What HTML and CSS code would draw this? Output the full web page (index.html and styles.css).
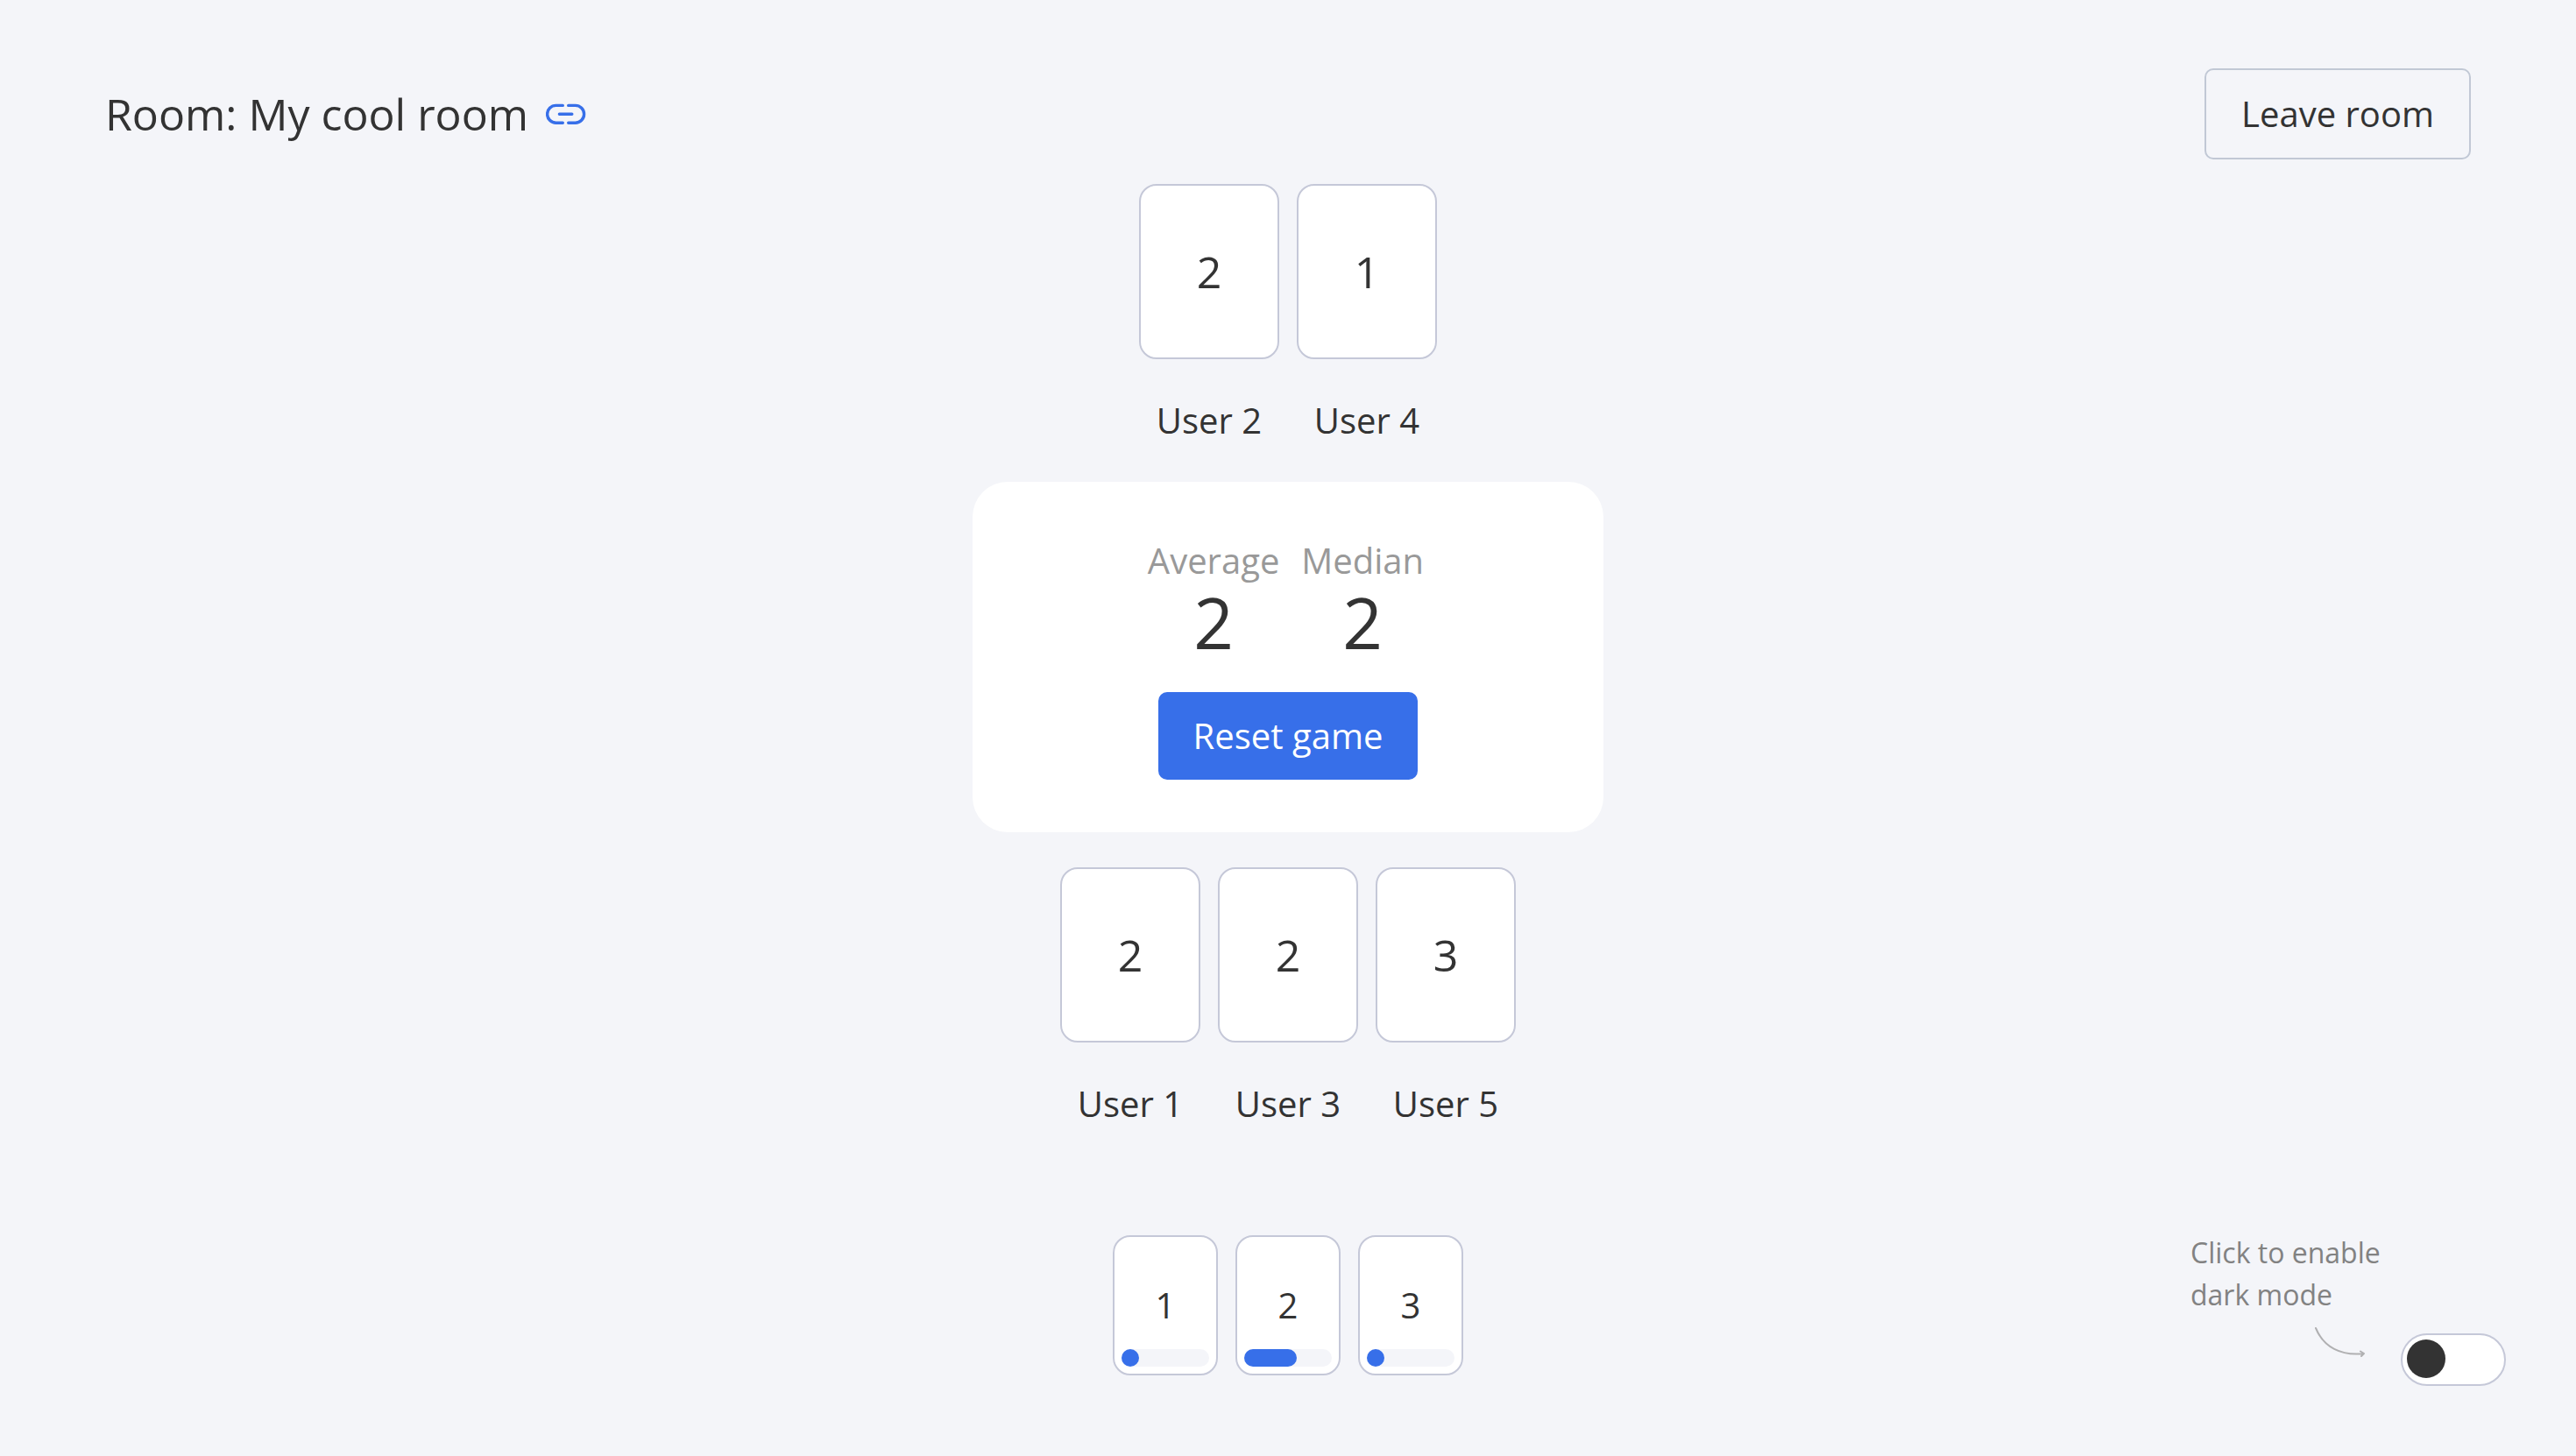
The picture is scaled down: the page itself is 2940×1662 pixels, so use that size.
FILE: index.html
```html
<!DOCTYPE html>
<html lang="en">
<head>
  <meta charset="utf-8">
  <meta name="viewport" content="width=device-width, initial-scale=1">
  <title>My cool room</title>
  <link rel="stylesheet" href="styles.css">
</head>
<body class="page">
  <header class="header">
    <div class="room">
      <h1 class="room-title">Room: My cool room</h1>
      <button class="link-button" type="button" aria-label="Copy room link">
        <svg class="link-icon" viewBox="1 0 46 24" fill="none" stroke="currentColor" stroke-width="3.4" stroke-linecap="round" aria-hidden="true">
          <path d="M20.300 2.400H12.500A9.900 9.900 0 0 0 12.500 22.200H20.300M26.700 2.400H34.700A9.900 9.900 0 0 1 34.700 22.200H26.700M16.400 12.300H30.800"/>
        </svg>
      </button>
    </div>
    <button class="button button-outline" type="button">Leave room</button>
  </header>

  <main class="table">
    <ul class="players">
      <li class="player"><span class="card">2</span><span class="player-name">User 2</span></li>
      <li class="player"><span class="card">1</span><span class="player-name">User 4</span></li>
    </ul>
    <section class="panel">
      <dl class="stats">
        <div class="stat"><dt class="stat-label">Average</dt><dd class="stat-value">2</dd></div>
        <div class="stat"><dt class="stat-label">Median</dt><dd class="stat-value">2</dd></div>
      </dl>
      <button class="button button-primary" type="button">Reset game</button>
    </section>
    <ul class="players">
      <li class="player"><span class="card">2</span><span class="player-name">User 1</span></li>
      <li class="player"><span class="card">2</span><span class="player-name">User 3</span></li>
      <li class="player"><span class="card">3</span><span class="player-name">User 5</span></li>
    </ul>
  </main>

  <footer class="footer">
    <div class="votes">
      <button class="vote" type="button">1<span class="bar"><span class="bar-fill" style="width: 20%"></span></span></button>
      <button class="vote" type="button">2<span class="bar"><span class="bar-fill" style="width: 60%"></span></span></button>
      <button class="vote" type="button">3<span class="bar"><span class="bar-fill" style="width: 20%"></span></span></button>
    </div>
    <div class="theme">
      <label class="theme-label" for="theme">Click to enable<br>dark mode</label>
      <div class="theme-row">
        <svg class="arrow" viewBox="0 0 60 36" fill="none" stroke="currentColor" stroke-width="2" stroke-linecap="round" stroke-linejoin="round" aria-hidden="true">
          <path d="M3 2C12 24 32 34 58 31M54 28.500L58 31L55 34"/>
        </svg>
        <input class="toggle" id="theme" type="checkbox" role="switch">
      </div>
    </div>
  </footer>
</body>
</html>
```
FILE: styles.css
```css
* {
  box-sizing: border-box;
}

.page {
  --ink: #333333;
  --line: #c5c8d8;
  --blue: #376fe9;
  --surface: #f4f5f9;
  display: flex;
  flex-direction: column;
  min-height: 100vh;
  margin: 0;
  padding: 78px 80px 80px;
  background: var(--surface);
  color: var(--ink);
  font-family: "Open Sans", "Noto Sans", sans-serif;
  font-size: 40px;
  line-height: 60px;
}

button {
  margin: 0;
  color: inherit;
  font: inherit;
  cursor: pointer;
}

.header {
  display: flex;
  align-items: center;
  justify-content: space-between;
  padding: 0 40px;
}

.room {
  display: flex;
  align-items: center;
  gap: 20px;
}

.room-title {
  margin: 0;
  font-size: 50px;
  font-weight: 400;
}

.link-button {
  display: flex;
  padding: 0;
  border: 0;
  background: none;
  color: var(--blue);
}

.link-icon {
  width: 46px;
  height: 24px;
}

.button {
  padding: 20px 40px;
  border: 0;
  border-radius: 10px;
}

.button-outline {
  border: 2px solid #c1c8d5;
  background: transparent;
}

.button-primary {
  background: var(--blue);
  color: #ffffff;
}

.table {
  display: flex;
  flex-direction: column;
  align-items: center;
  gap: 40px;
  margin-top: 28px;
}

.players {
  display: flex;
  gap: 20px;
  margin: 0;
  padding: 0;
  list-style: none;
}

.player {
  display: flex;
  flex-direction: column;
  align-items: center;
  gap: 40px;
}

.card,
.vote {
  border: 2px solid var(--line);
  border-radius: 20px;
  background: #ffffff;
}

.card {
  display: flex;
  align-items: center;
  justify-content: center;
  width: 160px;
  height: 200px;
  font-size: 50px;
}

.panel {
  display: flex;
  flex-direction: column;
  align-items: center;
  gap: 40px;
  width: 720px;
  max-width: 100%;
  padding: 60px;
  border-radius: 40px;
  background: #ffffff;
}

.stats {
  display: flex;
  margin: 0;
}

.stat {
  margin-right: 25px;
  text-align: center;
}

.stat:last-child {
  margin-right: 5px;
}

.stat-label {
  color: #999999;
}

.stat-value {
  margin: 0;
  font-size: 80px;
  line-height: 80px;
}

.footer {
  display: grid;
  grid-template-columns: 1fr auto 1fr;
  align-items: end;
  margin-top: auto;
}

.votes {
  display: flex;
  grid-column: 2;
  gap: 20px;
  margin-bottom: 12px;
}

.vote {
  position: relative;
  width: 120px;
  height: 160px;
  padding: 0;
}

.bar {
  position: absolute;
  right: 8px;
  bottom: 8px;
  left: 8px;
  height: 20px;
  border-radius: 10px;
  background: var(--surface);
}

.bar-fill {
  display: block;
  height: 100%;
  border-radius: 10px;
  background: var(--blue);
}

.theme {
  display: flex;
  flex-direction: column;
  justify-self: end;
  gap: 12px;
  width: 360px;
}

.theme-label {
  color: #828282;
  font-size: 32px;
  line-height: 48px;
}

.theme-row {
  display: flex;
  justify-content: flex-end;
  gap: 40px;
  height: 68px;
}

.arrow {
  width: 60px;
  height: 36px;
  color: #b0b0b2;
}

.toggle {
  align-self: flex-end;
  width: 120px;
  height: 60px;
  margin: 0;
  padding: 5px;
  border: 2px solid var(--line);
  border-radius: 30px;
  background: #ffffff;
  appearance: none;
  cursor: pointer;
}

.toggle::before {
  display: block;
  width: 44px;
  height: 44px;
  border-radius: 50%;
  background: var(--ink);
  content: "";
}

.toggle:checked::before {
  margin-left: auto;
}
```
